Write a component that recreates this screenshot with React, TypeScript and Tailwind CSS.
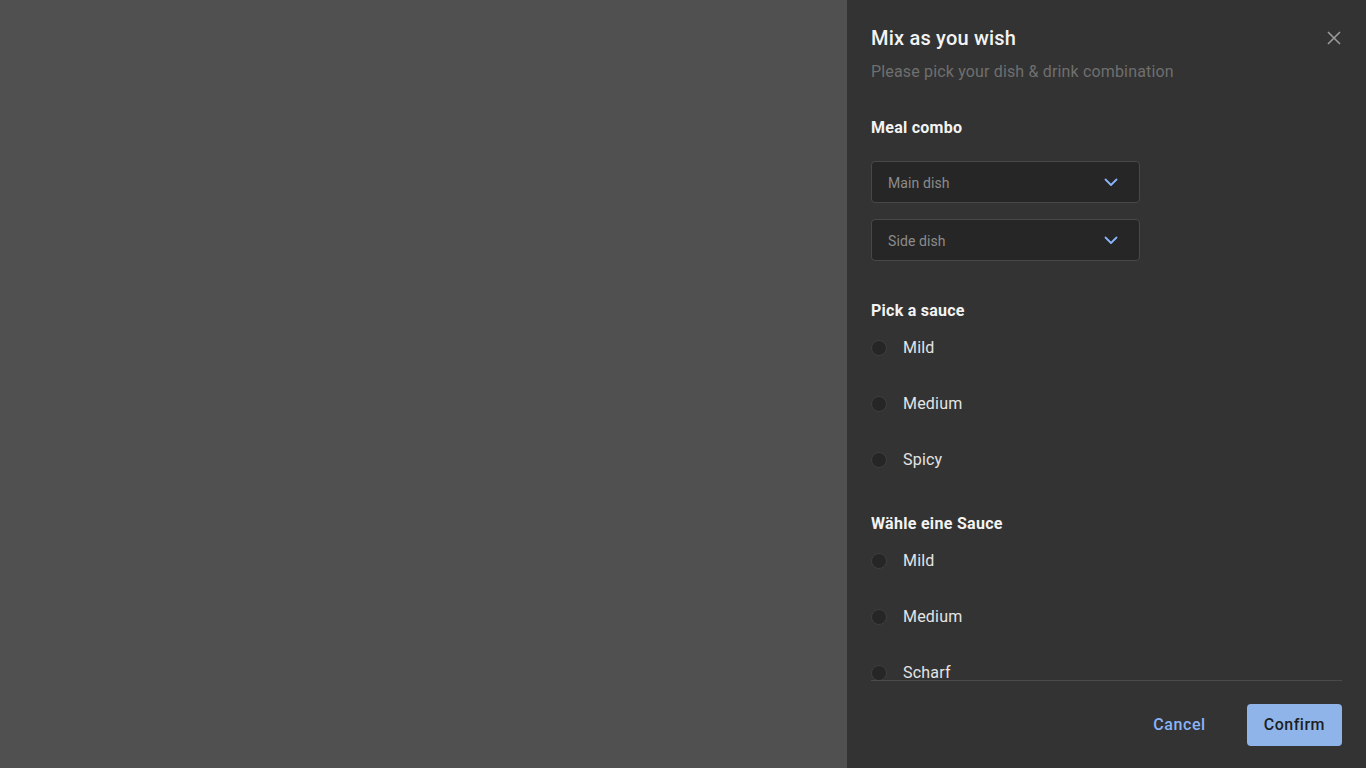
import React from 'react';

const Chevron = () => (
    <svg width="14" height="14" viewBox="0 0 14 14" fill="none">
        <path d="M1.5 4.5L7 10l5.5-5.5" stroke="#8ab4f8" strokeWidth="1.8" strokeLinecap="round" strokeLinejoin="round" />
    </svg>
);

const Select = ({ label }: { label: string }) => (
    <div className="w-[269px] h-[42px] rounded-[4px] border border-[#484848] bg-[#262626] flex items-center justify-between pl-4 pr-[21px]">
        <span className="text-sm text-[#8c8c8c] tracking-[0.1px] pt-[1px]">{label}</span>
        <Chevron />
    </div>
);

const Radio = ({ label }: { label: string }) => (
    <div className="h-10 flex items-center gap-4">
        <span className="w-4 h-4 rounded-full bg-[#262626] border border-[#3e3e3e]" />
        <span className="text-base text-[#e4e4e4] tracking-[0.2px]">{label}</span>
    </div>
);

export default function App() {
    return (
        <div className="w-[1366px] h-[768px] flex bg-[#505050] overflow-hidden" style={{ fontFamily: 'Roboto, "Noto Sans", sans-serif' }}>
            <div className="flex-1" />
            <aside className="w-[519px] h-full bg-[#333333] flex flex-col">
                <div className="flex-1 mx-6 border-b border-[#4a4a4a] overflow-hidden pt-6">
                    <div className="flex items-start justify-between">
                        <h2 className="text-xl leading-7 font-medium text-[#f3f3f3] tracking-[0.2px]">Mix as you wish</h2>
                        <svg width="14" height="14" viewBox="0 0 14 14" className="mt-[7px] mr-[1px]">
                            <path d="M1 1l12 12M13 1L1 13" stroke="#9a9a9a" strokeWidth="1.6" />
                        </svg>
                    </div>
                    <p className="mt-2 text-base leading-6 text-[#6f6f6f] tracking-[0.16px]">Please pick your dish &amp; drink combination</p>

                    <h3 className="mt-8 text-base leading-6 font-bold text-[#f3f3f3] tracking-[0.25px]">Meal combo</h3>
                    <div className="mt-[21px] flex flex-col gap-4">
                        <Select label="Main dish" />
                        <Select label="Side dish" />
                    </div>

                    <h3 className="mt-[38px] text-base leading-6 font-bold text-[#f3f3f3] tracking-[0.25px]">Pick a sauce</h3>
                    <div className="mt-[5px] flex flex-col gap-4">
                        <Radio label="Mild" />
                        <Radio label="Medium" />
                        <Radio label="Spicy" />
                    </div>

                    <h3 className="mt-8 text-base leading-6 font-bold text-[#f3f3f3] tracking-[0.3px]">Wähle eine Sauce</h3>
                    <div className="mt-[5px] flex flex-col gap-4">
                        <Radio label="Mild" />
                        <Radio label="Medium" />
                        <Radio label="Scharf" />
                    </div>
                </div>
                <div className="px-6 pt-[23px] pb-[22px] flex justify-end gap-[25px]">
                    <button className="h-[42px] px-4 rounded-[4px] text-base font-medium tracking-[0.6px] text-[#8ab4f8]">Cancel</button>
                    <button className="h-[42px] px-[17px] rounded-[4px] bg-[#8fb4ea] text-base font-medium tracking-[0.5px] text-[#1c1f24]">Confirm</button>
                </div>
            </aside>
        </div>
    );
}
